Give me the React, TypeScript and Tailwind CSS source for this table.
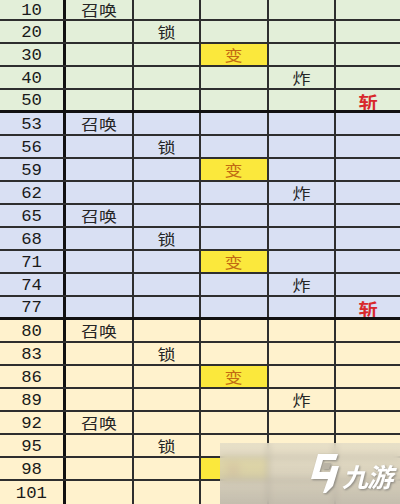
import React from 'react';

type Mark = '召唤' | '锁' | '变' | '炸' | '斩' | '';

type Row = { n: number; mark: Mark };

const sections: { bg: string; rows: Row[] }[] = [
    {
        bg: 'bg-[#e3efd9]',
        rows: [
            { n: 10, mark: '召唤' },
            { n: 20, mark: '锁' },
            { n: 30, mark: '变' },
            { n: 40, mark: '炸' },
            { n: 50, mark: '斩' },
        ],
    },
    {
        bg: 'bg-[#d9e0f3]',
        rows: [
            { n: 53, mark: '召唤' },
            { n: 56, mark: '锁' },
            { n: 59, mark: '变' },
            { n: 62, mark: '炸' },
            { n: 65, mark: '召唤' },
            { n: 68, mark: '锁' },
            { n: 71, mark: '变' },
            { n: 74, mark: '炸' },
            { n: 77, mark: '斩' },
        ],
    },
    {
        bg: 'bg-[#fff2cd]',
        rows: [
            { n: 80, mark: '召唤' },
            { n: 83, mark: '锁' },
            { n: 86, mark: '变' },
            { n: 89, mark: '炸' },
            { n: 92, mark: '召唤' },
            { n: 95, mark: '锁' },
            { n: 98, mark: '变' },
            { n: 101, mark: '' },
        ],
    },
];

const cols: Mark[] = ['召唤', '锁', '变', '炸', '斩'];

const cjk = "font-['Noto_Sans_CJK_SC',sans-serif]";

function Cell({ mark, active, last }: { mark: Mark; active: boolean; last: boolean }) {
    const isChange = mark === '变';
    return (
        <div
            className={`flex items-center justify-center ${last ? '' : 'border-r-2 border-[#2e2e2e]'} ${active && isChange ? 'bg-[#fbe83c]' : ''
                }`}
        >
            {active && (
                <span
                    className={`inline-block scale-x-[1.2] leading-none ${cjk} ${mark === '斩'
                        ? 'text-[16px] font-bold text-[#d8282c] translate-y-[1px]'
                        : mark === '变'
                            ? 'text-[15px] text-[#c26a12]'
                            : 'text-[15px] text-[#262626]'
                        }`}
                >
                    {mark}
                </span>
            )}
        </div>
    );
}

function Logo() {
    return (
        <svg width="30" height="42" viewBox="0 0 30 42" className="drop-shadow-[1px_1px_1px_rgba(90,90,90,0.6)]">
            <path
                d="M8 1 L28 1 L26 7 L13 7 L9.5 19 L20 19 L22 13 L29 13 L23 33 L16 40 L13 40 L18 26 L1 26 Z"
                fill="#ffffff"
            />
            <path d="M14 10 L21 10 L19 16 L12 16 Z" fill="#b9b3a5" />
        </svg>
    );
}

export default function App() {
    return (
        <div className="relative w-[400px] h-[504px] overflow-hidden bg-white">
            {sections.map((s, si) => (
                <div key={si} className={s.bg}>
                    {s.rows.map((r, ri) => {
                        const first = si === 0 && ri === 0;
                        const sectionEnd = ri === s.rows.length - 1 && si < sections.length - 1;
                        const lastRow = si === sections.length - 1 && ri === s.rows.length - 1;
                        return (
                            <div
                                key={r.n}
                                className={`grid grid-cols-[66px_68px_67px_68px_67px_64px] ${first ? 'h-[21px]' : 'h-[23px]'
                                    } ${sectionEnd
                                        ? 'border-b-[3px] border-[#111]'
                                        : lastRow
                                            ? ''
                                            : 'border-b-2 border-[#2e2e2e]'
                                    }`}
                            >
                                <div className="flex items-center justify-center border-r-[3px] border-[#111] pt-[2px]">
                                    <span className="inline-block scale-x-[1.08] text-[16px] leading-none text-[#1a1a1a] font-['Liberation_Mono',monospace]">
                                        {r.n}
                                    </span>
                                </div>
                                {cols.map((c, ci) => (
                                    <Cell key={c} mark={c} active={r.mark === c} last={ci === cols.length - 1} />
                                ))}
                            </div>
                        );
                    })}
                </div>
            ))}

            <div className="absolute left-[220px] top-[443px] w-[180px] h-[61px] backdrop-blur-[3px] bg-gradient-to-b from-[#e2dbc6]/80 via-[#d2cbb9]/85 to-[#bdb7aa]/90 flex items-center pl-[90px] gap-[2px]">
                <Logo />
                <span
                    className={`${cjk} text-[26px] font-bold italic text-white leading-none tracking-[-1px] drop-shadow-[1px_1px_1px_rgba(90,90,90,0.6)] mt-[4px]`}
                >
                    九游
                </span>
            </div>
        </div>
    );
}
